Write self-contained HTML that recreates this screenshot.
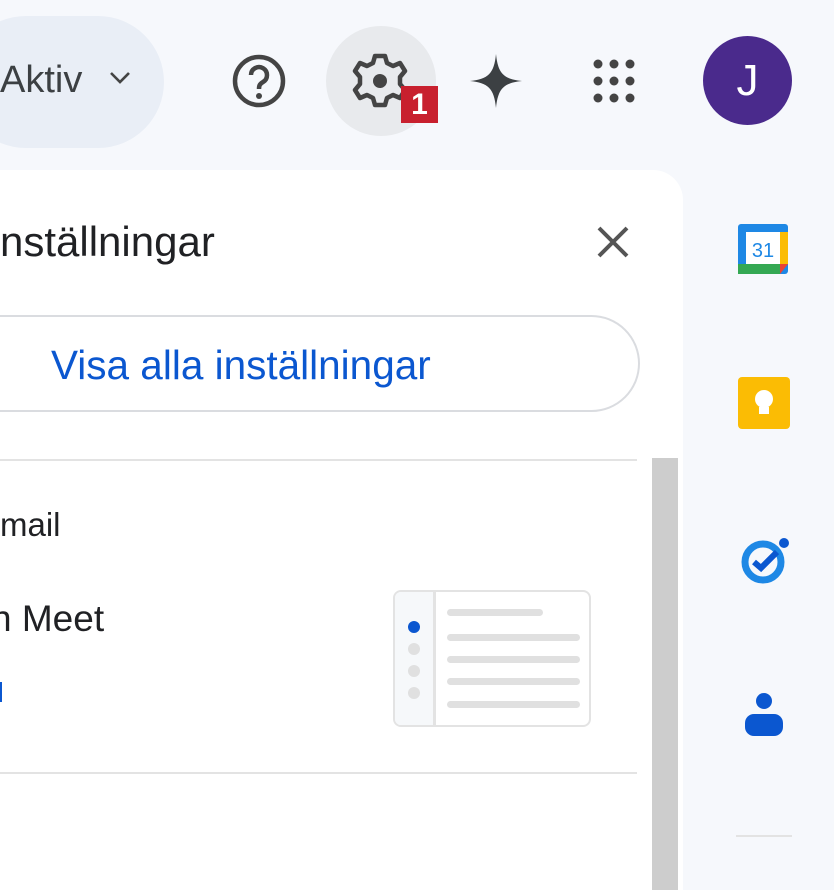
<!DOCTYPE html>
<html><head><meta charset="utf-8"><style>
html,body{margin:0;padding:0;width:834px;height:890px;overflow:hidden;background:#f6f8fc;font-family:"Liberation Sans",sans-serif;position:relative}
.a{position:absolute}
</style></head><body>
<div class="a" style="left:-40px;top:16px;width:204px;height:132px;border-radius:66px;background:#e9eef6"></div>
<div class="a" style="left:0;top:59px;font-size:38px;color:#3c4043">Aktiv</div>
<svg class="a" style="left:108px;top:70px" width="24" height="16" viewBox="0 0 24 16"><path d="M3 3l9 9 9-9" fill="none" stroke="#444" stroke-width="2.6"/></svg>
<svg class="a" style="left:230px;top:52px" width="58" height="58" viewBox="0 0 58 58"><circle cx="29" cy="29" r="24" fill="none" stroke="#444" stroke-width="4.5"/><path d="M21 23a8 8 0 1 1 12 7c-3 2-4 3-4 7" fill="none" stroke="#444" stroke-width="4.5"/><circle cx="29" cy="44" r="3" fill="#444"/></svg>
<div class="a" style="left:326px;top:26px;width:110px;height:110px;border-radius:55px;background:#e8eaed"></div>
<svg class="a" style="left:350px;top:50px" width="60" height="62" viewBox="-30 -31 60 62"><path d="M-5 -25h10l2 7 6 3 7-3 5 8-5 6v7l5 6-5 8-7-3-6 3-2 7h-10l-2-7-6-3-7 3-5-8 5-6v-7l-5-6 5-8 7 3 6-3z" fill="none" stroke="#444" stroke-width="4.5" stroke-linejoin="round"/><circle cx="0" cy="0" r="7" fill="#444"/></svg>
<div class="a" style="left:401px;top:86px;width:37px;height:37px;background:#c8202e;color:#fff;font-weight:bold;font-size:30px;text-align:center;line-height:37px">1</div>
<svg class="a" style="left:466px;top:52px" width="60" height="58" viewBox="0 0 60 58"><path d="M30 2C32 22 38 27 56 29 38 31 32 36 30 56 28 36 22 31 4 29 22 27 28 22 30 2z" fill="#3c4043"/></svg>
<svg class="a" style="left:590px;top:58px" width="48" height="46" viewBox="0 0 48 46"><g fill="#444"><circle cx="8" cy="6" r="4.5"/><circle cx="24" cy="6" r="4.5"/><circle cx="40" cy="6" r="4.5"/><circle cx="8" cy="23" r="4.5"/><circle cx="24" cy="23" r="4.5"/><circle cx="40" cy="23" r="4.5"/><circle cx="8" cy="40" r="4.5"/><circle cx="24" cy="40" r="4.5"/><circle cx="40" cy="40" r="4.5"/></g></svg>
<div class="a" style="left:703px;top:36px;width:89px;height:89px;border-radius:50%;background:#4a2a8c;color:#fff;font-size:44px;text-align:center;line-height:89px">J</div>

<div class="a" style="left:-30px;top:170px;width:713px;height:740px;background:#fff;border-top-right-radius:30px"></div>
<div class="a" style="left:0;top:218px;font-size:42px;color:#202124">nställningar</div>
<svg class="a" style="left:595px;top:224px" width="36" height="36" viewBox="0 0 36 36"><path d="M4 4l28 28M32 4L4 32" stroke="#555" stroke-width="4"/></svg>
<div class="a" style="left:-60px;top:315px;width:700px;height:97px;border:2px solid #dadce0;border-radius:50px;box-sizing:border-box"></div>
<div class="a" style="left:51px;top:342px;font-size:40.5px;color:#0b57d0">Visa alla inställningar</div>
<div class="a" style="left:0;top:459px;width:637px;height:2px;background:#e3e3e3"></div>
<div class="a" style="left:0;top:772px;width:637px;height:2px;background:#e3e3e3"></div>
<div class="a" style="left:652px;top:458px;width:26px;height:432px;background:#cdcdcd"></div>
<div class="a" style="left:0;top:506px;font-size:33px;color:#202124">mail</div>
<div class="a" style="left:-9px;top:598px;font-size:37px;color:#202124">n Meet</div>
<div class="a" style="left:-6px;top:682px;width:8px;height:20px;background:#0b57d0"></div>
<div class="a" style="left:393px;top:590px;width:198px;height:137px;border:2px solid #e3e3e3;border-radius:8px;box-sizing:border-box;overflow:hidden">
 <div class="a" style="left:0;top:0;width:38px;height:135px;background:#f6f8fa;border-right:3px solid #e3e3e3"></div>
 <div class="a" style="left:13px;top:29px;width:12px;height:12px;border-radius:50%;background:#0b57d0"></div>
 <div class="a" style="left:13px;top:51px;width:12px;height:12px;border-radius:50%;background:#e0e0e0"></div>
 <div class="a" style="left:13px;top:73px;width:12px;height:12px;border-radius:50%;background:#e0e0e0"></div>
 <div class="a" style="left:13px;top:95px;width:12px;height:12px;border-radius:50%;background:#e0e0e0"></div>
 <div class="a" style="left:52px;top:17px;width:96px;height:7px;border-radius:4px;background:#e0e0e0"></div>
 <div class="a" style="left:52px;top:42px;width:133px;height:7px;border-radius:4px;background:#e0e0e0"></div>
 <div class="a" style="left:52px;top:64px;width:133px;height:7px;border-radius:4px;background:#e0e0e0"></div>
 <div class="a" style="left:52px;top:86px;width:133px;height:7px;border-radius:4px;background:#e0e0e0"></div>
 <div class="a" style="left:52px;top:109px;width:133px;height:7px;border-radius:4px;background:#e0e0e0"></div>
</div>

<svg class="a" style="left:736px;top:222px" width="54" height="54" viewBox="0 0 54 54"><rect x="2" y="2" width="50" height="50" rx="3" fill="#1e88e5"/><rect x="10" y="10" width="34" height="32" fill="#fff"/><rect x="2" y="42" width="42" height="10" fill="#34a853"/><rect x="44" y="10" width="8" height="32" fill="#fbbc04"/><path d="M44 42h8l-8 10z" fill="#ea4335"/><text x="27" y="35" font-size="20" text-anchor="middle" fill="#1e88e5" font-family="Liberation Sans">31</text></svg>
<svg class="a" style="left:738px;top:377px" width="52" height="52" viewBox="0 0 52 52"><rect width="52" height="52" rx="4" fill="#fbbc04"/><circle cx="26" cy="22" r="9" fill="#fff"/><rect x="21" y="30" width="10" height="7" fill="#fff"/></svg>
<svg class="a" style="left:740px;top:535px" width="52" height="50" viewBox="0 0 52 50"><circle cx="23" cy="27" r="18" fill="none" stroke="#1e88e5" stroke-width="7"/><path d="M14 27l7 6 16-16" fill="none" stroke="#0b57d0" stroke-width="6"/><circle cx="44" cy="8" r="5" fill="#0b57d0"/></svg>
<svg class="a" style="left:744px;top:690px" width="40" height="48" viewBox="0 0 40 48"><circle cx="20" cy="11" r="8" fill="#0b57d0"/><rect x="1" y="24" width="38" height="22" rx="9" fill="#0b57d0"/></svg>
<div class="a" style="left:736px;top:835px;width:56px;height:2px;background:#e3e3e3"></div>
</body></html>
